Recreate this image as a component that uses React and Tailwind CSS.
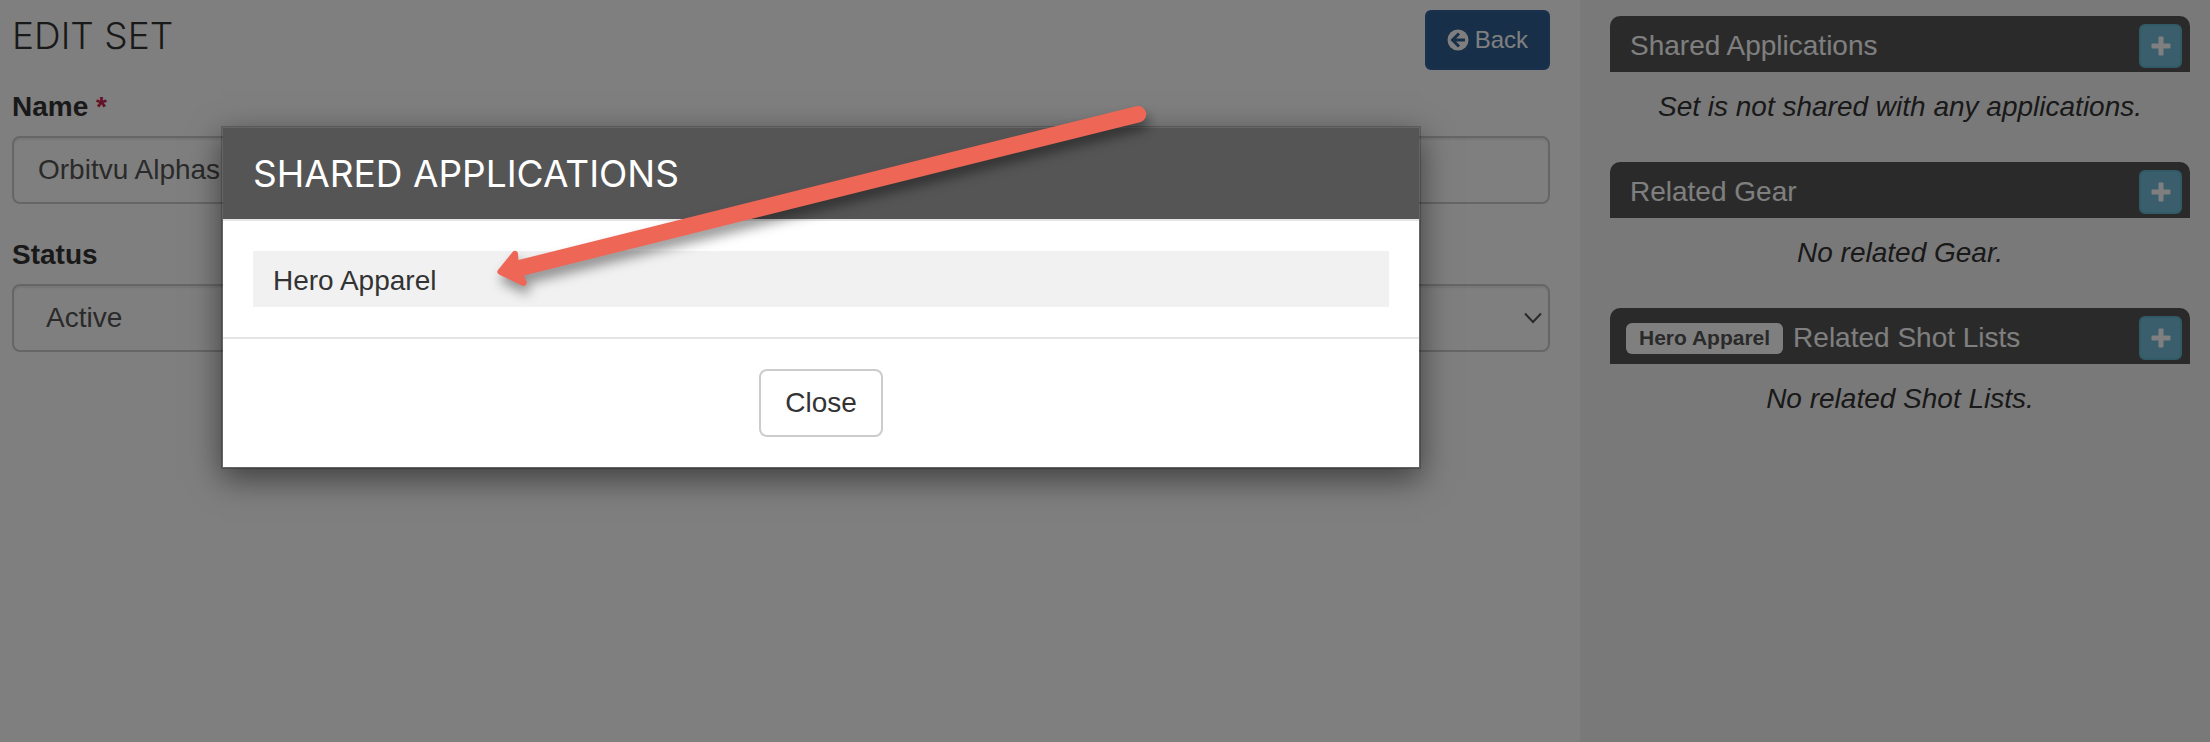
import React, { useState } from "react";

const PANELS = [
  { id: "apps", title: "Shared Applications", empty: "Set is not shared with any applications." },
  { id: "gear", title: "Related Gear", empty: "No related Gear." },
  { id: "shots", title: "Related Shot Lists", badge: "Hero Apparel", empty: "No related Shot Lists." },
];

function PlusIcon() {
  return (
    <svg viewBox="0 0 20 20" className="w-5 h-5" fill="currentColor" aria-hidden="true">
      <rect x="7.500" y=".5" width="5" height="19" rx="1" />
      <rect x=".5" y="7.500" width="19" height="5" rx="1" />
    </svg>
  );
}

function BackIcon() {
  return (
    <svg viewBox="0 0 22 22" className="w-[22px] h-[22px]" aria-hidden="true">
      <circle cx="11" cy="11" r="10.500" fill="currentColor" />
      <path d="M12 4.500 5.500 11l6.500 6.500M6 11h12" fill="none" stroke="#2e5e92" strokeWidth="3" />
    </svg>
  );
}

function Panel({ title, badge, empty }) {
  return (
    <section>
      <header
        className={`h-14 pt-1 pr-2 flex items-center gap-2.5 rounded-t-[10px] bg-[#555] text-white ${
          badge ? "pl-4" : "pl-5"
        }`}
      >
        {badge && (
          <span className="h-[31px] px-[13px] flex items-center rounded-md bg-white text-[#555] text-[21px] font-bold">
            {badge}
          </span>
        )}
        <h2 className="flex-1">{title}</h2>
        <button
          type="button"
          aria-label={`Add ${title}`}
          className="w-[43px] h-11 flex items-center justify-center rounded-md border-2 border-[#62b2cc] bg-[#76bcda]"
        >
          <PlusIcon />
        </button>
      </header>
      <p className="pt-3.5 text-center italic">{empty}</p>
    </section>
  );
}

function SharedModal({ onClose }) {
  return (
    <div className="absolute inset-0 bg-black/50 pl-[10%] pt-[126px]">
      <div
        role="dialog"
        aria-labelledby="modal-title"
        className="w-full max-w-[1200px] border-2 border-black/20 bg-white bg-clip-padding shadow-[0_10px_30px_rgba(0,0,0,0.5)]"
      >
        <div className="px-[30px] py-5 border-b-2 border-[#e5e5e5] bg-[#555]">
          <h2 id="modal-title" className="font-[Inter] text-[37px] leading-[51px] font-normal text-white">
            SHARED APPLICATIONS
          </h2>
        </div>
        <ul className="p-[30px]">
          <li className="h-14 px-5 pt-1 flex items-center bg-[#f1f1f1]">Hero Apparel</li>
        </ul>
        <div className="p-[30px] flex justify-center border-t-2 border-[#e5e5e5]">
          <button
            type="button"
            onClick={onClose}
            className="h-[68px] px-6 rounded-lg border-2 border-[#ccc] bg-white"
          >
            Close
          </button>
        </div>
      </div>
    </div>
  );
}

function PointerArrow() {
  return (
    <svg
      viewBox="0 0 680 210"
      className="absolute left-[480px] top-[90px] w-[680px] h-[210px] pointer-events-none drop-shadow-[3px_8px_6px_rgba(0,0,0,0.4)]"
      fill="#ee6655"
      aria-hidden="true"
    >
      <path d="M656 16.200a8.200 8.200 0 0 1 4 16L44 185.500 46.500 191.500a3.200 3.200 0 0 1-4.500 4L19 184.500a3.200 3.200 0 0 1-1-4.500L33 161.500a3 3 0 0 1 5 2L38.500 170z" />
    </svg>
  );
}

export default function App() {
  const [modalOpen, setModalOpen] = useState(true);

  return (
    <div className="relative min-h-screen flex overflow-hidden bg-white font-['Liberation_Sans',Arial,sans-serif] text-[28px] leading-[42px] text-[#333]">
      <main className="flex-1 pl-3 pr-[30px] pt-2.5">
        <div className="flex items-start justify-between mb-4">
          <h1 className="font-[Inter] text-[37px] leading-[51px] font-light">EDIT SET</h1>
          <button
            type="button"
            className="h-[60px] px-5 flex items-center gap-1.5 rounded-md border-2 border-[#32629a] bg-[#2e5e92] text-white text-2xl"
          >
            <BackIcon />
            Back
          </button>
        </div>

        <form className="flex flex-col gap-[30px]">
          <div className="flex flex-col gap-2">
            <label htmlFor="set-name" className="font-bold">
              Name <span className="text-[#c7254e]">*</span>
            </label>
            <input
              id="set-name"
              type="text"
              defaultValue="Orbitvu Alphas"
              className="w-full h-[68px] px-6 rounded-lg border-2 border-[#ccc] bg-white text-[#555] shadow-[inset_0_2px_2px_rgba(0,0,0,0.075)]"
            />
          </div>

          <div className="flex flex-col gap-2">
            <label htmlFor="set-status" className="font-bold">
              Status
            </label>
            <div className="relative">
              <select
                id="set-status"
                className="w-full h-[68px] px-8 appearance-none rounded-lg border-2 border-[#ccc] bg-white text-[#555] shadow-[inset_0_2px_2px_rgba(0,0,0,0.075)]"
              >
                <option>Active</option>
              </select>
              <svg
                viewBox="0 0 18 12"
                className="absolute right-2 top-7 w-[18px] h-3 pointer-events-none"
                fill="none"
                stroke="#555"
                strokeWidth="2"
                aria-hidden="true"
              >
                <path d="M1 1.500 9 10l8-8.500" />
              </svg>
            </div>
          </div>
        </form>
      </main>

      <aside className="w-[630px] pl-[30px] pr-5 pt-4 flex flex-col gap-[34px] bg-[#f2f2f2]">
        {PANELS.map((panel) => (
          <Panel key={panel.id} title={panel.title} badge={panel.badge} empty={panel.empty} />
        ))}
      </aside>

      {modalOpen && <SharedModal onClose={() => setModalOpen(false)} />}
      {modalOpen && <PointerArrow />}
    </div>
  );
}
